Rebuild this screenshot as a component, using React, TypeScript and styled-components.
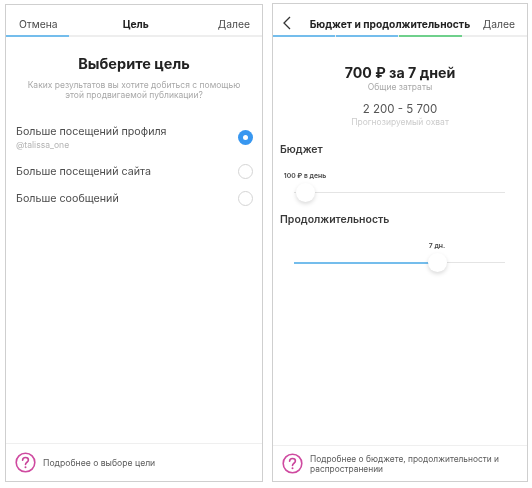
import React from "react";
import styled, { createGlobalStyle } from "styled-components";

const Global = createGlobalStyle`
  html, body { margin: 0; padding: 0; background: #fff; }
  body { font-family: Inter, "Noto Sans", "Liberation Sans", sans-serif; color: #262626; }
`;

const Page = styled.div`
  width: 532px;
  height: 488px;
  display: grid;
  grid-template-columns: 258px 256px;
  column-gap: 9px;
  padding: 3px 4px 6px 5px;
  box-sizing: border-box;
  overflow: hidden;
`;

const Phone = styled.section<{ $top: number }>`
  margin-top: ${(p) => p.$top}px;
  border: 1px solid #cfcfcf;
  display: flex;
  flex-direction: column;
  min-height: 0;
  box-sizing: border-box;
  filter: blur(0.45px);
`;

const Header = styled.header<{ $height: number }>`
  height: ${(p) => p.$height}px;
  padding-top: 8px;
  display: flex;
  align-items: center;
  justify-content: space-between;
  flex-shrink: 0;
  box-sizing: border-box;
`;

const NavText = styled.span<{ $left?: number; $right?: number }>`
  font-size: 10.3px;
  color: #4a4a4a;
  margin-left: ${(p) => p.$left ?? 0}px;
  margin-right: ${(p) => p.$right ?? 0}px;
`;

const NavTitle = styled.span<{ $left?: number; $right?: number }>`
  font-size: 10.25px;
  font-weight: 700;
  color: #222;
  white-space: nowrap;
  margin-left: ${(p) => p.$left ?? 0}px;
  margin-right: ${(p) => p.$right ?? 0}px;
`;

const Progress = styled.div`
  height: 2px;
  display: flex;
  gap: 1px;
  background: #eeeeee;
  flex-shrink: 0;
`;

const Segment = styled.div<{ $color: string; $width: number }>`
  width: ${(p) => p.$width}px;
  background: ${(p) => p.$color};
`;

const Body = styled.main`
  flex: 1;
  min-height: 0;
  display: flex;
  flex-direction: column;
`;

const Title = styled.h1`
  margin: 18px 0 0;
  font-size: 14.5px;
  line-height: 18px;
  font-weight: 700;
  color: #222;
  text-align: center;
`;

const Sub = styled.p`
  margin: 7px 0 0;
  font-size: 8.5px;
  line-height: 10px;
  color: #a8a8a8;
  text-align: center;
`;

const Options = styled.div`
  margin-top: 17px;
  display: flex;
  flex-direction: column;
  padding: 0 9px 0 10px;
`;

const Option = styled.div<{ $height: number }>`
  height: ${(p) => p.$height}px;
  display: flex;
  align-items: center;
  justify-content: space-between;
`;

const OptionLabel = styled.div`
  font-size: 10.7px;
  line-height: 13px;
  color: #4c4c4c;
`;

const Handle = styled.div`
  font-size: 8.6px;
  line-height: 10px;
  margin-top: 2.5px;
  color: #b4b4b4;
`;

const Radio = styled.span<{ $on?: boolean }>`
  width: 15px;
  height: 15px;
  border-radius: 50%;
  box-sizing: border-box;
  flex-shrink: 0;
  display: flex;
  align-items: center;
  justify-content: center;
  border: ${(p) => (p.$on ? "none" : "1px solid #d4d4d4")};
  background: ${(p) => (p.$on ? "#3897f0" : "#fff")};
  &::after {
    content: "";
    display: ${(p) => (p.$on ? "block" : "none")};
    width: 5px;
    height: 5px;
    border-radius: 50%;
    background: #fff;
  }
`;

const Footer = styled.footer<{ $height: number }>`
  height: ${(p) => p.$height}px;
  flex-shrink: 0;
  border-top: 1px solid #efefef;
  display: flex;
  align-items: center;
  gap: 7px;
  padding-left: 9px;
  padding-right: 12px;
`;

const FooterText = styled.span<{ $size: number }>`
  font-size: ${(p) => p.$size}px;
  line-height: 10px;
  color: #5a5a5a;
`;

const Stats = styled.div`
  margin-top: 27px;
  display: flex;
  flex-direction: column;
  align-items: center;
`;

const Cost = styled.div`
  font-size: 14.2px;
  line-height: 18px;
  font-weight: 700;
  color: #222;
`;

const StatLabel = styled.div<{ $color: string }>`
  font-size: 8.5px;
  line-height: 10px;
  color: ${(p) => p.$color};
`;

const Reach = styled.div`
  margin-top: 10px;
  font-size: 11.5px;
  line-height: 15px;
  color: #555;
`;

const SectionTitle = styled.h2<{ $top: number }>`
  margin: ${(p) => p.$top}px 0 0 7px;
  font-size: 10.5px;
  line-height: 13px;
  font-weight: 600;
  color: #3a3a3a;
`;

const Slider = styled.div<{ $top: number }>`
  margin: ${(p) => p.$top}px 22px 0 21px;
  position: relative;
  height: 10px;
`;

const ValueLabel = styled.div<{ $center: number }>`
  position: absolute;
  left: ${(p) => p.$center}px;
  top: -16px;
  transform: translateX(-50%);
  font-size: 6.8px;
  line-height: 8px;
  font-weight: 600;
  color: #444;
  white-space: nowrap;
`;

const Rail = styled.div`
  position: absolute;
  left: 0;
  right: 0;
  top: 4px;
  height: 1px;
  background: #e4e4e4;
`;

const Fill = styled.div`
  position: absolute;
  left: 0;
  top: 4px;
  height: 2px;
  background: #74bdec;
`;

const Thumb = styled.div`
  position: absolute;
  top: -5px;
  width: 19px;
  height: 19px;
  margin-left: -9.5px;
  border-radius: 50%;
  background: #fff;
  box-shadow: 0 2px 4px rgba(0, 0, 0, 0.15);
`;

const Back = styled.svg`
  width: 10px;
  height: 14px;
  margin-left: 9px;
  flex-shrink: 0;
  position: relative;
  top: -1px;
`;

const HelpIcon = () => (
  <svg width="21" height="21" viewBox="0 0 21 21" style={{ flexShrink: 0 }}>
    <circle cx="10.5" cy="10.5" r="9.3" fill="none" stroke="#cf4aa0" strokeWidth="1.6" />
    <path d="M7.6 8.2c0-1.7 1.3-2.7 2.9-2.7s2.9 1 2.9 2.5c0 2.3-2.9 2.2-2.9 4.5" fill="none" stroke="#c9449a" strokeWidth="1.6" strokeLinecap="round" />
    <circle cx="10.5" cy="15.2" r="1" fill="#c9449a" />
  </svg>
);

const GoalScreen = () => (
  <Phone $top={1}>
    <Header $height={30}>
      <NavText $left={13}>Отмена</NavText>
      <NavTitle $right={4}>Цель</NavTitle>
      <NavText $right={12}>Далее</NavText>
    </Header>
    <Progress>
      <Segment $color="#74bdec" $width={63} />
    </Progress>
    <Body>
      <Title>Выберите цель</Title>
      <Sub>
        Каких результатов вы хотите добиться с помощью
        <br />
        этой продвигаемой публикации?
      </Sub>
      <Options>
        <Option $height={41}>
          <OptionLabel>
            Больше посещений профиля
            <Handle>@talissa_one</Handle>
          </OptionLabel>
          <Radio $on />
        </Option>
        <Option $height={27}>
          <OptionLabel>Больше посещений сайта</OptionLabel>
          <Radio />
        </Option>
        <Option $height={27}>
          <OptionLabel>Больше сообщений</OptionLabel>
          <Radio />
        </Option>
      </Options>
    </Body>
    <Footer $height={37}>
      <HelpIcon />
      <FooterText $size={8.65}>Подробнее о выборе цели</FooterText>
    </Footer>
  </Phone>
);

const BudgetScreen = () => (
  <Phone $top={0}>
    <Header $height={31}>
      <Back viewBox="0 0 10 14">
        <path d="M8 1 2 7l6 6" fill="none" stroke="#333" strokeWidth="1.3" />
      </Back>
      <NavTitle $left={5}>Бюджет и продолжительность</NavTitle>
      <NavText $right={12}>Далее</NavText>
    </Header>
    <Progress>
      <Segment $color="#74bdec" $width={62} />
      <Segment $color="#74bdec" $width={62} />
      <Segment $color="#6fd08c" $width={63} />
    </Progress>
    <Body>
      <Stats>
        <Cost>700 ₽ за 7 дней</Cost>
        <StatLabel $color="#a8a8a8">Общие затраты</StatLabel>
        <Reach>2 200 - 5 700</Reach>
        <StatLabel $color="#cccccc">Прогнозируемый охват</StatLabel>
      </Stats>
      <SectionTitle $top={16}>Бюджет</SectionTitle>
      <Slider $top={32}>
        <ValueLabel $center={11}>100 ₽ в день</ValueLabel>
        <Rail />
        <Thumb style={{ left: "11px" }} />
      </Slider>
      <SectionTitle $top={15}>Продолжительность</SectionTitle>
      <Slider $top={32}>
        <ValueLabel $center={143}>7 дн.</ValueLabel>
        <Rail />
        <Fill style={{ width: "143px" }} />
        <Thumb style={{ left: "143px" }} />
      </Slider>
    </Body>
    <Footer $height={35}>
      <HelpIcon />
      <FooterText $size={8.37}>Подробнее о бюджете, продолжительности и распространении</FooterText>
    </Footer>
  </Phone>
);

export default function App() {
  return (
    <>
      <Global />
      <Page>
        <GoalScreen />
        <BudgetScreen />
      </Page>
    </>
  );
}
